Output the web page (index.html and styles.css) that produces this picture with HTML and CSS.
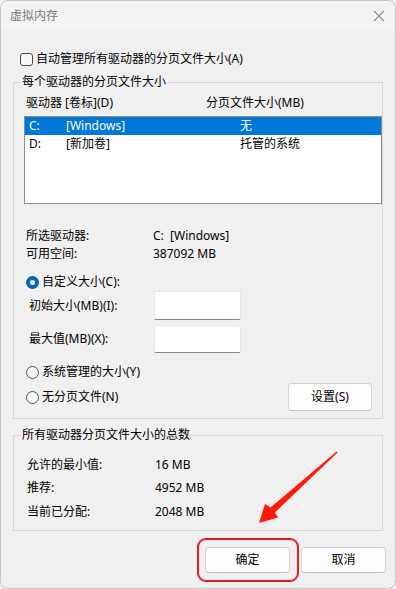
FILE: index.html
```html
<!DOCTYPE html>
<html lang="zh-CN">
<head>
    <meta charset="UTF-8">
    <meta name="viewport" content="width=device-width, initial-scale=1.0">
    <title>虚拟内存</title>
    <link rel="stylesheet" href="styles.css">
</head>
<body>
    <div class="window">
        <div class="titlebar">
            <span class="title">虚拟内存</span>
            <svg class="close" width="12" height="12" viewBox="0 0 12 12">
                <path d="M1 1 L11 11 M11 1 L1 11" stroke="#8a8a8a" stroke-width="1.1" fill="none"/>
            </svg>
        </div>

        <div class="content">
            <label class="check-row">
                <span class="checkbox"></span>
                <span>自动管理所有驱动器的分页文件大小(A)</span>
            </label>

            <fieldset class="group group-drives">
                <legend>每个驱动器的分页文件大小</legend>
                <div class="group-body">
                    <div class="list-head">
                        <span class="head-drive">驱动器 [卷标](D)</span>
                        <span>分页文件大小(MB)</span>
                    </div>
                    <div class="listbox">
                        <div class="list-row selected">
                            <span class="col-letter">C:</span>
                            <span class="col-label">[Windows]</span>
                            <span>无</span>
                        </div>
                        <div class="list-row">
                            <span class="col-letter">D:</span>
                            <span class="col-label">[新加卷]</span>
                            <span>托管的系统</span>
                        </div>
                    </div>

                    <div class="info">
                        <div class="info-row"><span class="info-label">所选驱动器:</span><span>C:&nbsp;&nbsp;[Windows]</span></div>
                        <div class="info-row"><span class="info-label">可用空间:</span><span>387092 MB</span></div>
                    </div>

                    <div class="radio-row first">
                        <span class="radio checked"></span>
                        <span>自定义大小(C):</span>
                    </div>
                    <div class="field-row">
                        <span class="field-label">初始大小(MB)(I):</span>
                        <span class="textbox tall"></span>
                    </div>
                    <div class="field-row second">
                        <span class="field-label">最大值(MB)(X):</span>
                        <span class="textbox"></span>
                    </div>
                    <div class="radio-row managed">
                        <span class="radio"></span>
                        <span>系统管理的大小(Y)</span>
                    </div>
                    <div class="radio-row last">
                        <span class="radio"></span>
                        <span class="grow">无分页文件(N)</span>
                        <span class="button set-button">设置(S)</span>
                    </div>
                </div>
            </fieldset>

            <fieldset class="group group-total">
                <legend>所有驱动器分页文件大小的总数</legend>
                <div class="total-body">
                    <div class="total-row"><span class="total-label">允许的最小值:</span><span>16 MB</span></div>
                    <div class="total-row"><span class="total-label">推荐:</span><span>4952 MB</span></div>
                    <div class="total-row third"><span class="total-label">当前已分配:</span><span>2048 MB</span></div>
                </div>
            </fieldset>

            <div class="actions">
                <span class="highlight"><span class="button">确定</span></span>
                <span class="button">取消</span>
            </div>
        </div>

        <svg class="arrow" width="396" height="589" viewBox="0 0 396 589">
            <polygon fill="#ff1a0a" points="336.6,451.4 337.6,452.6 274.8,512.6 278.2,517.4 259,523 265,504 270.6,507.6"/>
        </svg>
    </div>
</body>
</html>
```

FILE: styles.css
```css
* {
    box-sizing: border-box;
}

body {
    margin: 0;
    font-family: "Noto Sans", "Noto Sans CJK SC", sans-serif;
    font-size: 12px;
    color: #000;
    background: #f0f0f0;
}

.window {
    position: relative;
    width: 396px;
    height: 589px;
    border: 1px solid #c4c4c4;
    border-radius: 8px;
    background: #f0f0f0;
    overflow: hidden;
}

.titlebar {
    height: 29px;
    display: flex;
    align-items: center;
    justify-content: space-between;
    padding: 0 10px 0 9px;
    background: #f3f3f3;
}

.title {
    color: #7a7a7a;
    font-size: 12px;
    line-height: 18px;
}

.close {
    display: block;
    margin-top: 1px;
}

.content {
    padding: 0 12px;
}

.check-row {
    display: flex;
    align-items: center;
    height: 18px;
    margin-top: 20px;
    padding-left: 7px;
    line-height: 18px;
}

.checkbox {
    width: 13px;
    height: 13px;
    margin-right: 3px;
    border: 1px solid #4a4a4a;
    border-radius: 3px;
    background: #f8f8f8;
}

.group {
    margin: 0;
    padding: 0;
    border: 1px solid #d6d6d6;
    min-width: 0;
}

.group legend {
    margin-left: 7px;
    padding: 0 1px;
    line-height: 18px;
}

.group-drives {
    margin-top: 5px;
}

.group-body {
    padding: 0 0 7px 10px;
}

.list-head {
    display: flex;
    height: 18px;
    margin-top: 3px;
    padding-left: 2px;
    line-height: 18px;
}

.head-drive {
    width: 180px;
}

.listbox {
    height: 88px;
    margin-top: 4px;
    border: 1px solid #8c8c8c;
    background: #fff;
}

.list-row {
    display: flex;
    height: 18px;
    padding-left: 4px;
    line-height: 18px;
}

.list-row.selected {
    background: #0078d7;
    color: #fff;
}

.col-letter {
    width: 37px;
}

.col-label {
    width: 174px;
}

.info {
    margin-top: 23px;
    padding-left: 2px;
}

.info-row {
    display: flex;
    height: 18px;
    line-height: 18px;
}

.info-label {
    width: 127px;
}

.radio-row {
    display: flex;
    align-items: center;
    height: 18px;
    padding-left: 2px;
    line-height: 18px;
}

.radio-row.first,
.radio-row.managed {
    margin-top: 10px;
}

.radio-row.last {
    height: 28px;
    margin-top: 2px;
    padding-right: 10px;
}

.radio {
    width: 13px;
    height: 13px;
    margin-right: 3px;
    border: 1px solid #555;
    border-radius: 50%;
    background: #f7f7f7;
}

.radio.checked {
    border: 4px solid #0067c0;
    background: #fff;
}

.grow {
    flex: 1;
}

.field-row {
    display: flex;
    align-items: center;
    height: 29px;
    padding-left: 5px;
}

.field-row.second {
    height: 28px;
    margin-top: 5px;
}

.field-label {
    width: 125px;
    line-height: 18px;
}

.textbox {
    width: 87px;
    height: 100%;
    background: #fff;
    border: 1px solid #e6e6e6;
    border-bottom: 1px solid #858585;
    border-radius: 2px;
}

.button {
    display: flex;
    align-items: center;
    justify-content: center;
    width: 85px;
    height: 26px;
    background: #fdfdfd;
    border: 1px solid #d3d3d3;
    border-bottom-color: #c2c2c2;
    border-radius: 4px;
    line-height: 18px;
}

.set-button {
    width: 84px;
    height: 28px;
}

.group-total {
    margin-top: 7px;
}

.total-body {
    padding: 12px 0 9px 13px;
}

.total-row {
    display: flex;
    height: 18px;
    line-height: 18px;
    margin-bottom: 5px;
}

.total-row.third {
    margin-top: 6px;
    margin-bottom: 0;
}

.total-label {
    width: 128px;
}

.actions {
    display: flex;
    justify-content: flex-end;
    gap: 11px;
    margin-top: 16px;
    margin-right: -3px;
}

.highlight {
    position: relative;
    display: block;
}

.highlight::after {
    content: "";
    position: absolute;
    top: -9px;
    right: -9px;
    bottom: -9px;
    left: -8px;
    border: 2.5px solid #f01818;
    border-radius: 9px;
}

.arrow {
    position: absolute;
    top: -1px;
    left: -1px;
    pointer-events: none;
}
```
